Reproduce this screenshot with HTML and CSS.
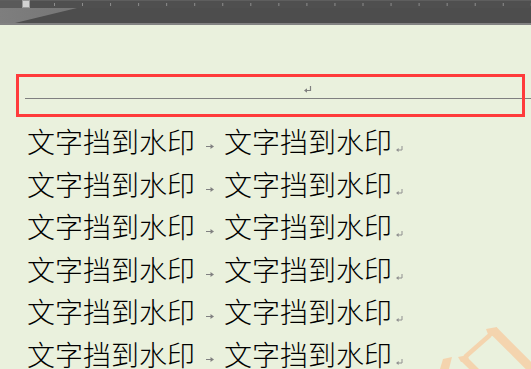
FILE: index.html
```html
<!DOCTYPE html>
<html lang="zh">
<head>
<meta charset="utf-8">
<link rel="stylesheet" href="styles.css">
</head>
<body>
<div class="toolbar">
  <div class="ruler">
    <div class="ruler-left"></div>
    <div class="marker"></div>
    <div class="ruler-main"></div>
  </div>
  <div class="band">
    <svg class="band-svg" width="531" height="15" viewBox="0 0 531 15">
      <defs>
        <linearGradient id="g" x1="0" y1="0" x2="1" y2="0">
          <stop offset="0" stop-color="#7e7e7e"/>
          <stop offset="1" stop-color="#767676"/>
        </linearGradient>
      </defs>
      <polygon points="0,0 77,0 15,15 0,15" fill="url(#g)"/>
    </svg>
  </div>
</div>
<div class="page">
  <div class="header">
    <div class="header-mark">
      <svg width="8" height="7" viewBox="0 0 8 7"><path d="M6.5 0 V4.5 H1.5" fill="none" stroke="#808080" stroke-width="1.2"/><path d="M0 4.5 L3 2.3 V6.7 Z" fill="#808080"/></svg>
    </div>
  </div>
  <div class="rows">
    <div class="row"><span class="seg">文字挡到水印</span><span class="tab"><svg class="tab-arrow" width="8" height="5" viewBox="0 0 8 5"><path d="M0 2.5 H5.5" stroke="#808080" stroke-width="1"/><path d="M8 2.5 L4.5 0 V5 Z" fill="#808080"/></svg></span><span class="seg">文字挡到水印</span><svg class="ret" width="7" height="6" viewBox="0 0 7 6"><path d="M6 0 V4 H1.5" fill="none" stroke="#909090" stroke-width="1"/><path d="M0 4 L2.6 2 V6 Z" fill="#909090"/></svg></div>
    <div class="row"><span class="seg">文字挡到水印</span><span class="tab"><svg class="tab-arrow" width="8" height="5" viewBox="0 0 8 5"><path d="M0 2.5 H5.5" stroke="#808080" stroke-width="1"/><path d="M8 2.5 L4.5 0 V5 Z" fill="#808080"/></svg></span><span class="seg">文字挡到水印</span><svg class="ret" width="7" height="6" viewBox="0 0 7 6"><path d="M6 0 V4 H1.5" fill="none" stroke="#909090" stroke-width="1"/><path d="M0 4 L2.6 2 V6 Z" fill="#909090"/></svg></div>
    <div class="row"><span class="seg">文字挡到水印</span><span class="tab"><svg class="tab-arrow" width="8" height="5" viewBox="0 0 8 5"><path d="M0 2.5 H5.5" stroke="#808080" stroke-width="1"/><path d="M8 2.5 L4.5 0 V5 Z" fill="#808080"/></svg></span><span class="seg">文字挡到水印</span><svg class="ret" width="7" height="6" viewBox="0 0 7 6"><path d="M6 0 V4 H1.5" fill="none" stroke="#909090" stroke-width="1"/><path d="M0 4 L2.6 2 V6 Z" fill="#909090"/></svg></div>
    <div class="row"><span class="seg">文字挡到水印</span><span class="tab"><svg class="tab-arrow" width="8" height="5" viewBox="0 0 8 5"><path d="M0 2.5 H5.5" stroke="#808080" stroke-width="1"/><path d="M8 2.5 L4.5 0 V5 Z" fill="#808080"/></svg></span><span class="seg">文字挡到水印</span><svg class="ret" width="7" height="6" viewBox="0 0 7 6"><path d="M6 0 V4 H1.5" fill="none" stroke="#909090" stroke-width="1"/><path d="M0 4 L2.6 2 V6 Z" fill="#909090"/></svg></div>
    <div class="row"><span class="seg">文字挡到水印</span><span class="tab"><svg class="tab-arrow" width="8" height="5" viewBox="0 0 8 5"><path d="M0 2.5 H5.5" stroke="#808080" stroke-width="1"/><path d="M8 2.5 L4.5 0 V5 Z" fill="#808080"/></svg></span><span class="seg">文字挡到水印</span><svg class="ret" width="7" height="6" viewBox="0 0 7 6"><path d="M6 0 V4 H1.5" fill="none" stroke="#909090" stroke-width="1"/><path d="M0 4 L2.6 2 V6 Z" fill="#909090"/></svg></div>
    <div class="row"><span class="seg">文字挡到水印</span><span class="tab"><svg class="tab-arrow" width="8" height="5" viewBox="0 0 8 5"><path d="M0 2.5 H5.5" stroke="#808080" stroke-width="1"/><path d="M8 2.5 L4.5 0 V5 Z" fill="#808080"/></svg></span><span class="seg">文字挡到水印</span><svg class="ret" width="7" height="6" viewBox="0 0 7 6"><path d="M6 0 V4 H1.5" fill="none" stroke="#909090" stroke-width="1"/><path d="M0 4 L2.6 2 V6 Z" fill="#909090"/></svg></div>
  </div>
  <div class="highlight"></div>
  <svg class="watermark" width="101" height="49" viewBox="430 320 101 49">
    <g fill="#f4d4ae" stroke="none">
      <line x1="494" y1="331" x2="542" y2="379" stroke="#f4d4ae" stroke-width="9"/>
      <line x1="490" y1="335" x2="465" y2="357" stroke="#f4d4ae" stroke-width="4.5"/>
      <polygon points="486,329 497,327 498,334 489,337"/>
      <line x1="464" y1="359" x2="479" y2="374" stroke="#f4d4ae" stroke-width="7"/>
      <polygon points="458,357 468,355 469,361 461,362"/>
      <polygon points="443,359 452,357 449,369 440,369"/>
    </g>
  </svg>
</div>
</body>
</html>
```
FILE: styles.css
```css
html, body {
  margin: 0;
  padding: 0;
}
body {
  width: 531px;
  height: 369px;
  overflow: hidden;
  background: #eaf1dd;
  font-family: "Noto Sans CJK SC", "Noto Sans", sans-serif;
}
.toolbar {
  background: #4d4d4d;
  height: 23px;
  border-bottom: 2px solid #828282;
}
.ruler {
  display: flex;
  height: 8px;
  border-top: 1px solid #5e5e5e;
  box-sizing: border-box;
}
.ruler-left {
  width: 22px;
  background: #5a5a5a;
}
.marker {
  width: 8px;
  box-sizing: border-box;
  border: 1px solid #9a9a9a;
  background: #d2d2d2;
  margin-top: -1px;
  height: 8px;
}
.ruler-main {
  flex: 1;
  background: linear-gradient(to right, #8e8e8e 1px, transparent 1px) 24px 2px / 28.06px 3px repeat-x, #4f4f4f;
}
.band {
  height: 15px;
}
.band-svg {
  display: block;
}
.page {
  position: relative;
  height: 344px;
}
.header {
  margin-left: 25px;
  padding-top: 61px;
  height: 12px;
  border-bottom: 1px solid #808080;
}
.header-mark {
  padding-left: 279px;
  line-height: 0;
}
.rows {
  margin-top: 21px;
  padding-left: 27px;
}
.row {
  display: flex;
  align-items: flex-start;
  height: 42.6px;
  line-height: 42.5px;
  font-size: 28px;
  font-weight: 300;
  color: #000;
}
.seg {
  width: 168px;
  white-space: nowrap;
}
.tab {
  width: 29px;
  display: flex;
}
.tab-arrow {
  margin-left: 11px;
  margin-top: 24px;
}
.ret {
  margin-left: 4px;
  margin-top: 26px;
}
.highlight {
  position: absolute;
  left: 16px;
  top: 49px;
  width: 509px;
  height: 43px;
  box-sizing: border-box;
  border: 3px solid #ff3b3b;
}
.watermark {
  position: absolute;
  left: 430px;
  top: 295px;
}
```
